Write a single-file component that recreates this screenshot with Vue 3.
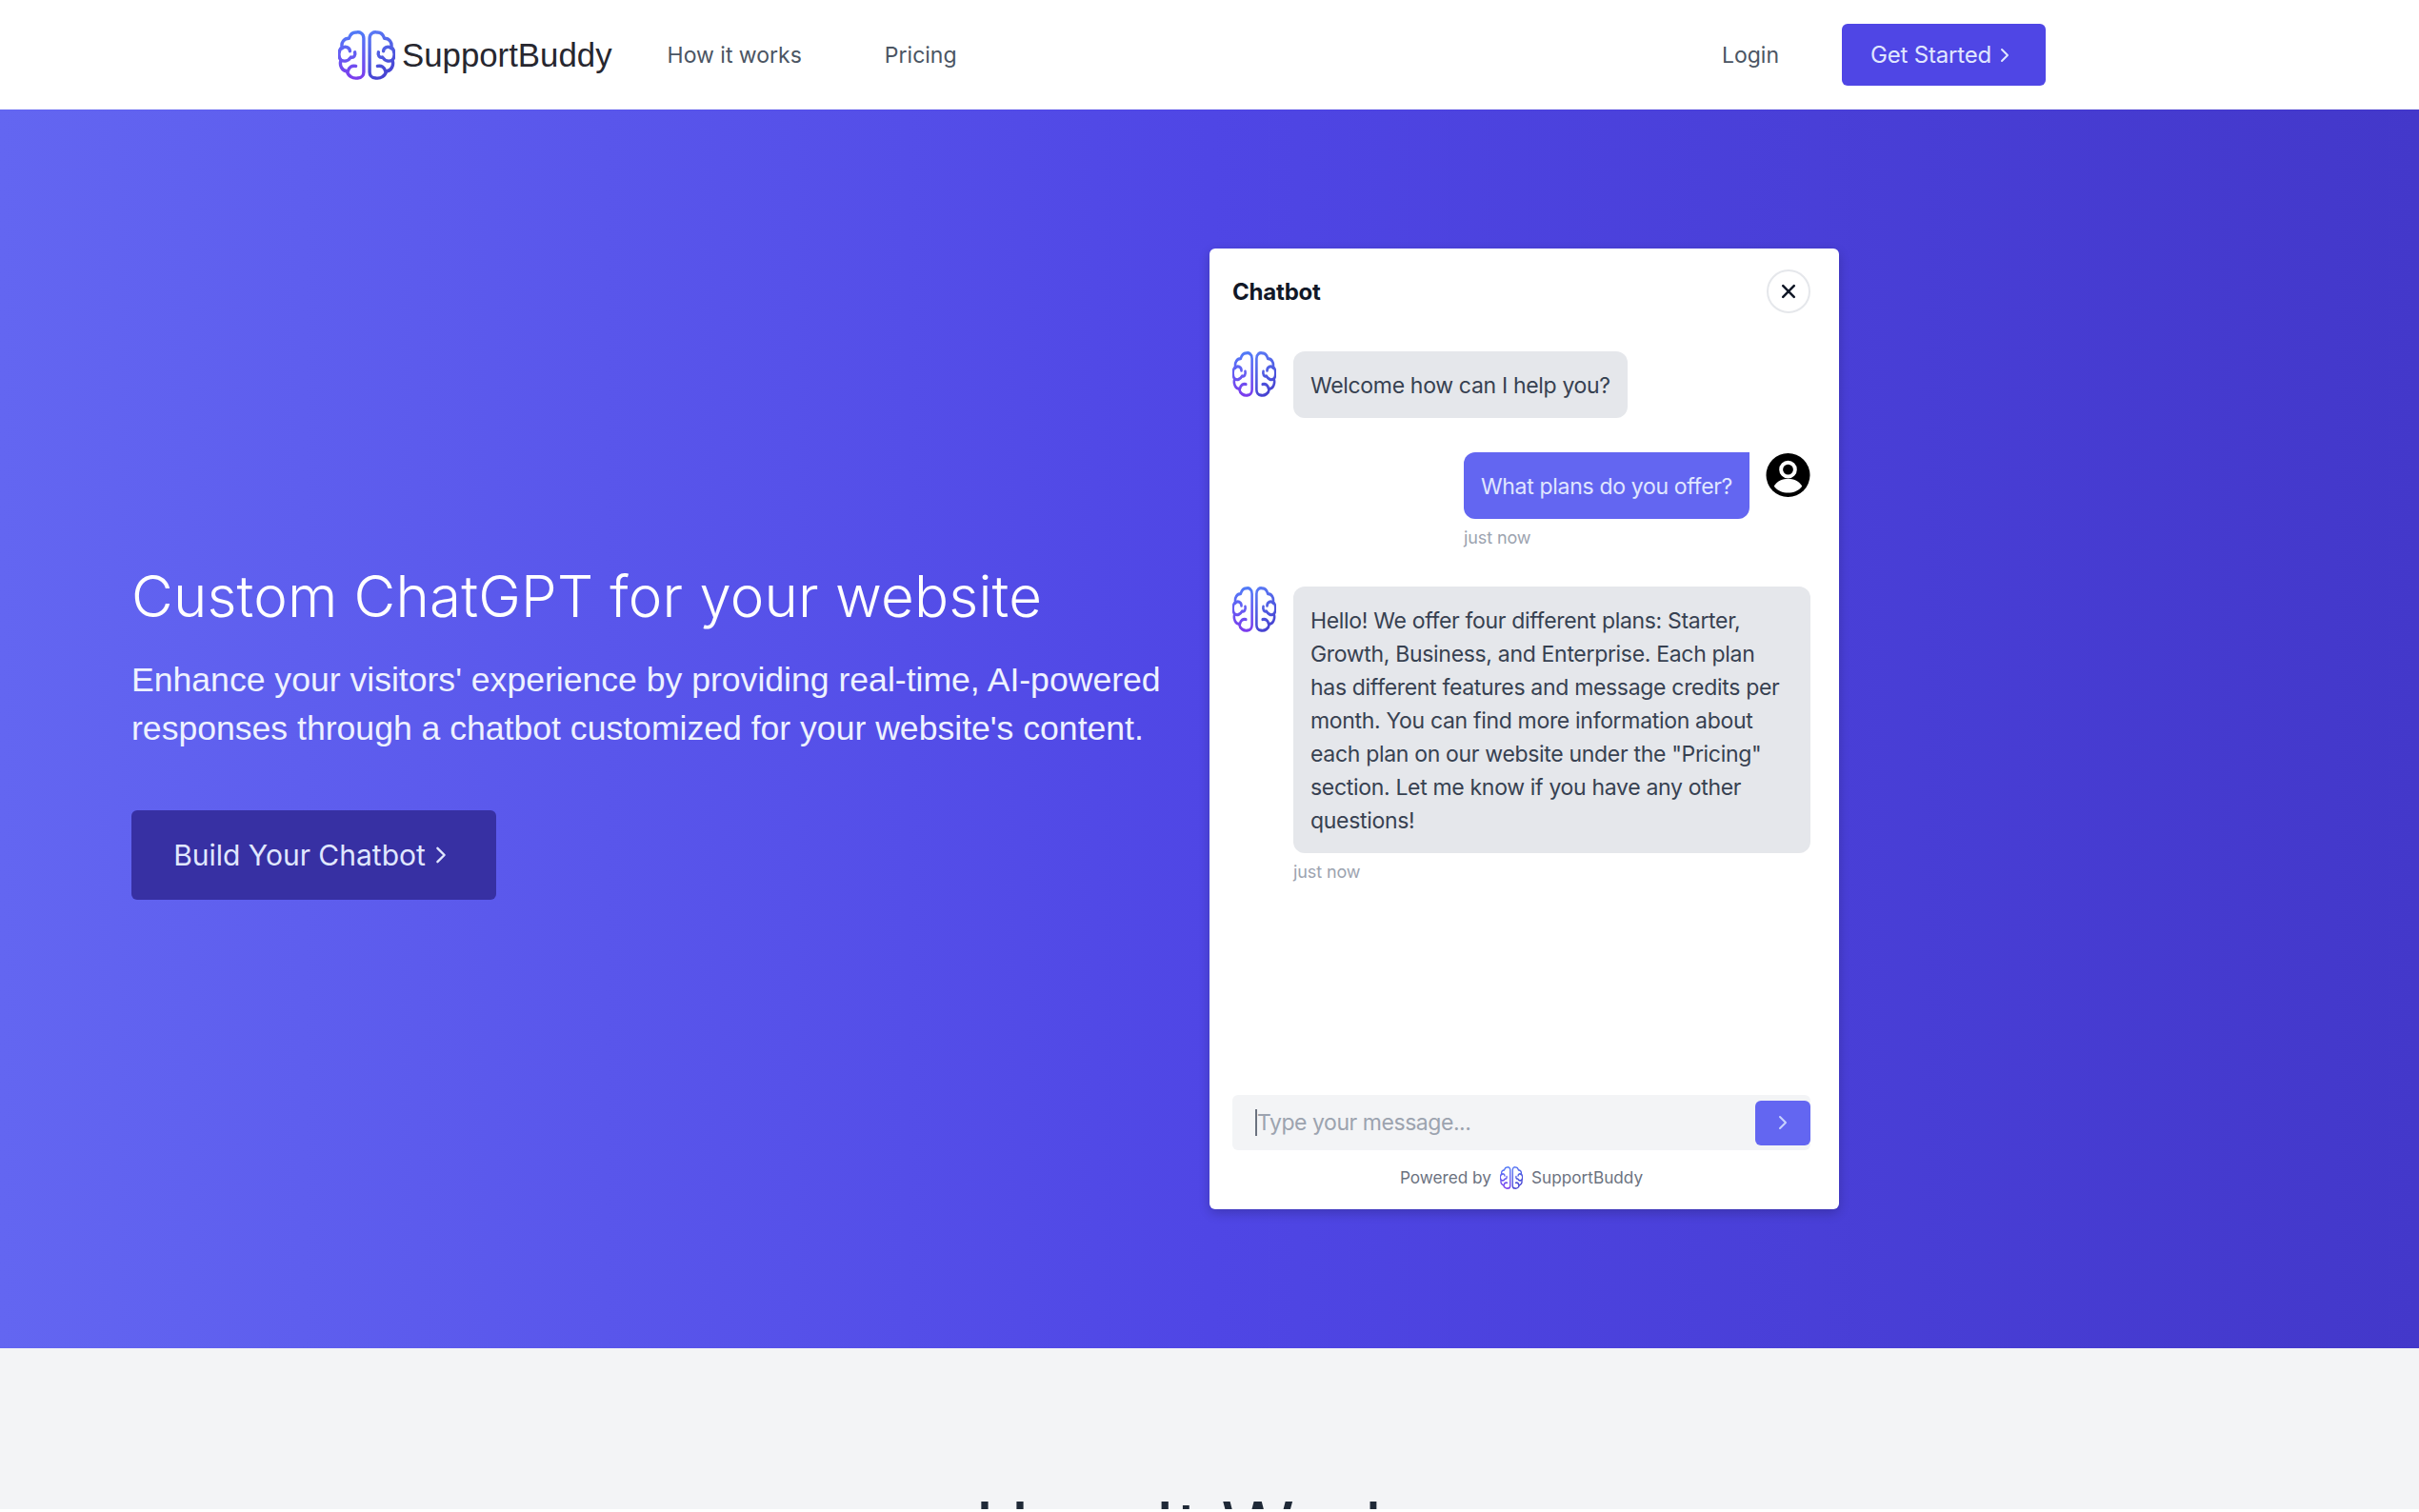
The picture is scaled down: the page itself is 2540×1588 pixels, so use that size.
<template>
  <div class="page">
    <header class="nav">
      <a class="brand">
        <svg class="brand-icon" viewBox="0 0 58 50" preserveAspectRatio="none">
          <defs>
            <linearGradient id="brainLeft" gradientUnits="userSpaceOnUse" x1="0" y1="0" x2="0" y2="50">
              <stop offset="0" stop-color="#4f7cf7" />
              <stop offset="1" stop-color="#7c3aed" />
            </linearGradient>
            <linearGradient id="brainRight" gradientUnits="userSpaceOnUse" x1="32" y1="0" x2="58" y2="50">
              <stop offset="0" stop-color="#5b7cf7" />
              <stop offset="1" stop-color="#4338ca" />
            </linearGradient>
            <g id="brain" fill="none" stroke-width="3.3" stroke-linecap="round" stroke-linejoin="round">
              <g stroke="url(#brainLeft)">
                <path d="M26 8C26 3 22 1 18 2C14 2 12 5 11 8C6 8 3 12 4 17C0 20 0 27 3 30C1 35 4 41 9 41C10 46 15 49 20 48C24 48 26 45 26 42Z" />
                <path d="M4 18C7 15 12 17 12 21M3 30C7 32 11 30 13 27C16 28 18 25 17 22M10 41C11 37 14 35 18 36" />
              </g>
              <g stroke="url(#brainRight)">
                <path d="M32 8C32 3 36 1 40 2C44 2 46 5 47 8C52 8 55 12 54 17C58 20 58 27 55 30C57 35 54 41 49 41C48 46 43 49 38 48C34 48 32 45 32 42Z" />
                <path d="M54 18C51 15 46 17 46 21M55 30C51 32 47 30 45 27C42 28 40 25 41 22M48 41C47 37 44 35 40 36" />
              </g>
            </g>
          </defs>
          <use href="#brain" />
        </svg>
        <span class="brand-name">SupportBuddy</span>
      </a>
      <nav class="nav-links">
        <a>How it works</a>
        <a>Pricing</a>
      </nav>
      <div class="nav-right">
        <a class="login">Login</a>
        <button class="get-started">
          Get Started
          <svg class="chev" viewBox="0 0 10 16"><path d="M2 2l6 6-6 6" /></svg>
        </button>
      </div>
    </header>

    <section class="hero">
      <div class="hero-copy">
        <h1>Custom ChatGPT for your website</h1>
        <p>Enhance your visitors' experience by providing real-time, AI-powered responses through a chatbot customized for your website's content.</p>
        <button class="cta">
          Build Your Chatbot
          <svg class="chev" viewBox="0 0 10 16"><path d="M2 2l6 6-6 6" /></svg>
        </button>
      </div>

      <div class="chat">
        <div class="chat-head">
          <strong>Chatbot</strong>
          <button class="close">
            <svg viewBox="0 0 14 14"><path d="M2.5 2.5l9 9M11.5 2.5l-9 9" /></svg>
          </button>
        </div>

        <div class="messages">
          <div class="msg">
            <svg class="avatar" viewBox="0 0 58 50" preserveAspectRatio="none"><use href="#brain" /></svg>
            <div class="bubble bot">Welcome how can I help you?</div>
          </div>

          <div class="msg mine">
            <div class="body">
              <div class="bubble me">What plans do you offer?</div>
              <div class="stamp">just now</div>
            </div>
            <svg class="avatar user" viewBox="0 0 48 48">
              <circle cx="24" cy="24" r="23.5" fill="#000" />
              <circle cx="24" cy="18" r="7.5" fill="none" stroke="#fff" stroke-width="4" />
              <path d="M9 36c3-6 9-8 15-8s12 2 15 8c-4 5-9 7-15 7s-11-2-15-7z" fill="#fff" />
            </svg>
          </div>

          <div class="msg">
            <svg class="avatar" viewBox="0 0 58 50" preserveAspectRatio="none"><use href="#brain" /></svg>
            <div class="body">
              <div class="bubble bot">Hello! We offer four different plans: Starter, Growth, Business, and Enterprise. Each plan has different features and message credits per month. You can find more information about each plan on our website under the "Pricing" section. Let me know if you have any other questions!</div>
              <div class="stamp">just now</div>
            </div>
          </div>
        </div>

        <div class="composer">
          <span class="caret"></span>
          <span class="placeholder">Type your message...</span>
          <button class="send">
            <svg class="chev" viewBox="0 0 10 16"><path d="M2 2l6 6-6 6" /></svg>
          </button>
        </div>
        <div class="powered">
          Powered by
          <svg class="mini" viewBox="0 0 58 50" preserveAspectRatio="none"><use href="#brain" /></svg>
          SupportBuddy
        </div>
      </div>
    </section>

    <section class="how">
      <h2>How It Works</h2>
    </section>
  </div>
</template>

<script setup>
</script>

<style>
html, body {
  background: #fff;
}
</style>

<style scoped>
.page {
  height: 1585px;
  overflow: hidden;
  font-family: Inter, "Liberation Sans", sans-serif;
  color: #111827;
}
button {
  font-family: inherit;
  border: 0;
  cursor: pointer;
}
.chev {
  width: 10px;
  height: 16px;
  fill: none;
  stroke: currentColor;
  stroke-width: 2;
  stroke-linecap: round;
  stroke-linejoin: round;
}

/* nav */
.nav {
  height: 115px;
  box-sizing: border-box;
  padding: 0 392px 0 355px;
  display: flex;
  align-items: center;
  background: #fff;
}
.brand {
  display: flex;
  align-items: center;
  gap: 7px;
}
.brand-icon {
  width: 60px;
  height: 52px;
}
.brand-name {
  font-family: "Liberation Sans", Arial, sans-serif;
  font-size: 34.8px;
  color: #27272f;
}
.nav-links {
  display: flex;
  gap: 87px;
  margin-left: 58px;
  font-size: 23px;
  color: #4b5563;
}
.nav-right {
  margin-left: auto;
  display: flex;
  align-items: center;
  gap: 66px;
}
.login {
  font-size: 23px;
  color: #4b5563;
}
.get-started {
  width: 214px;
  height: 65px;
  padding: 0 8px 0 0;
  border-radius: 6px;
  background: #4f46e5;
  color: #e0e7ff;
  font-size: 24px;
  letter-spacing: -0.2px;
  display: flex;
  align-items: center;
  justify-content: center;
  gap: 9px;
}

/* hero */
.hero {
  height: 1301px;
  box-sizing: border-box;
  padding-left: 138px;
  display: flex;
  align-items: center;
  background: linear-gradient(90deg, #6366f1, #4f46e5 50%, #4338ca);
}
.hero-copy {
  width: 1132px;
  flex: none;
  color: #fff;
}
h1 {
  margin: 0;
  font-size: 60px;
  font-weight: 300;
  line-height: 78px;
  letter-spacing: 0.2px;
}
.hero-copy p {
  margin: 24px 0 0;
  width: 1100px;
  font-family: "Liberation Sans", Arial, sans-serif;
  font-size: 35.6px;
  line-height: 51px;
  color: #eef2ff;
}
.cta {
  margin-top: 60px;
  width: 383px;
  height: 94px;
  padding: 0 8px 0 0;
  border-radius: 6px;
  background: #3730a3;
  color: #e0e7ff;
  font-size: 30px;
  display: flex;
  align-items: center;
  justify-content: center;
  gap: 10px;
}
.cta .chev {
  width: 12px;
  height: 20px;
}

/* chat card */
.chat {
  width: 661px;
  height: 1009px;
  box-sizing: border-box;
  padding: 22px 30px 21px 24px;
  border-radius: 6px;
  background: #fff;
  box-shadow: 0 4px 12px rgba(0, 0, 0, 0.2);
  display: flex;
  flex-direction: column;
}
.chat-head {
  display: flex;
  align-items: center;
  justify-content: space-between;
  height: 46px;
  font-size: 24px;
}
.chat-head strong {
  letter-spacing: -0.2px;
}
.close {
  width: 46px;
  height: 46px;
  border-radius: 50%;
  background: #fff;
  border: 2px solid #e5e7eb;
  padding: 12px;
  display: flex;
}
.close svg {
  fill: none;
  stroke: #111827;
  stroke-width: 2;
  stroke-linecap: round;
}
.messages {
  flex: 1;
  margin-top: 40px;
}
.msg {
  display: flex;
  gap: 18px;
  margin-bottom: 36px;
}
.msg.mine {
  justify-content: flex-end;
  gap: 17px;
}
.avatar {
  width: 46px;
  height: 48px;
  flex: none;
}
.avatar.user {
  width: 47px;
}
.bubble {
  box-sizing: border-box;
  padding: 18.5px 18px 16.5px;
  font-size: 23px;
  line-height: 35px;
  letter-spacing: -0.32px;
  border-radius: 12px;
}
.bot {
  width: fit-content;
  background: #e5e7eb;
  color: #374151;
}
.me {
  background: #6366f1;
  color: #e0e7ff;
  border-radius: 12px 0 12px 12px;
}
.stamp {
  margin: 9px 0 4px;
  font-size: 18px;
  line-height: 22px;
  letter-spacing: -0.1px;
  color: #9ca3af;
}
.composer {
  position: relative;
  height: 58px;
  display: flex;
  align-items: center;
  padding-left: 24px;
  background: #f3f4f6;
  border-radius: 6px;
  font-size: 23px;
  letter-spacing: -0.45px;
  color: #9ca3af;
}
.caret {
  width: 2px;
  height: 28px;
  background: #6b7280;
}
.send {
  margin-left: auto;
  width: 58px;
  height: 47px;
  border-radius: 6px;
  background: #6366f1;
  color: #c7d2fe;
  display: flex;
  align-items: center;
  justify-content: center;
}
.powered {
  margin-top: 17px;
  display: flex;
  align-items: center;
  justify-content: center;
  gap: 9px;
  font-size: 17.2px;
  line-height: 24px;
  color: #6b7280;
}
.mini {
  width: 24px;
  height: 24px;
}

/* how it works */
.how {
  height: 169px;
  overflow: hidden;
  background: #f3f4f6;
  text-align: center;
}
h2 {
  margin: 150px 0 0;
  font-size: 78px;
  font-weight: 400;
  line-height: 80px;
  color: #1f2937;
}
</style>
